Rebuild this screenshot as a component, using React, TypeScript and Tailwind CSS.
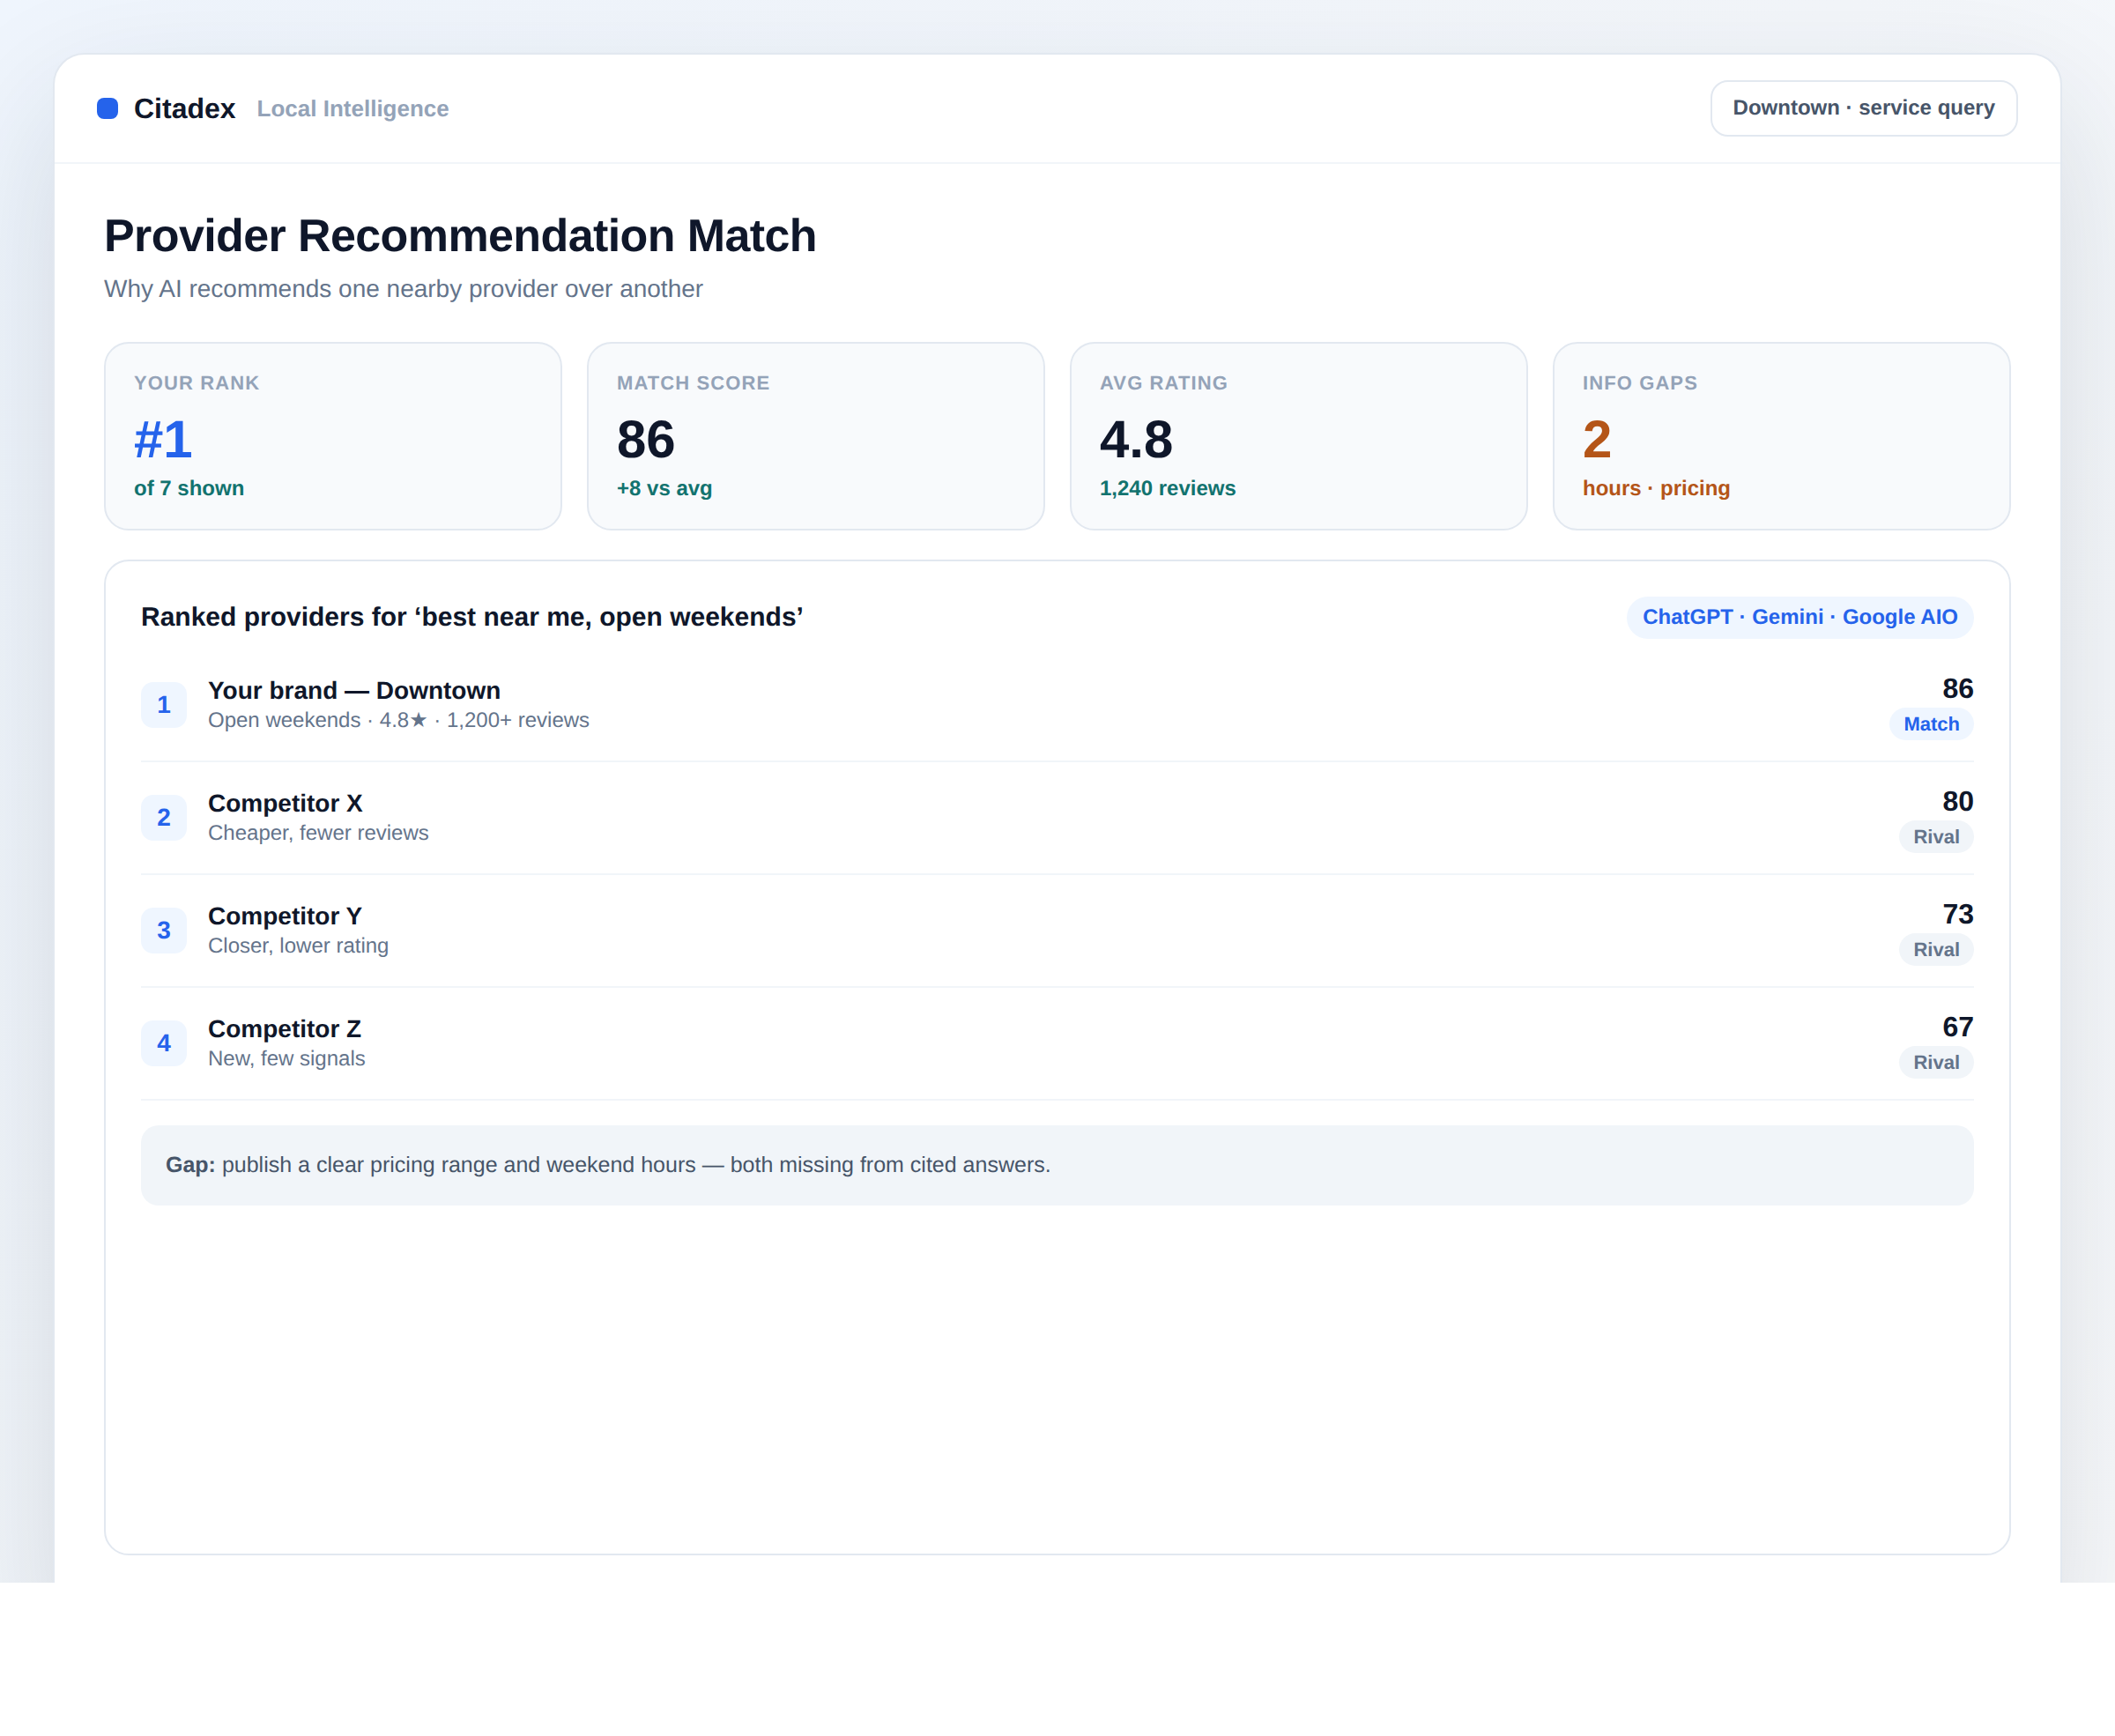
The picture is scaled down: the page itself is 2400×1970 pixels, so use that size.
const stats = [
  { label: "YOUR RANK", value: "#1", sub: "of 7 shown", valueClass: "text-[#2563eb]", subClass: "text-[#12736f]" },
  { label: "MATCH SCORE", value: "86", sub: "+8 vs avg", valueClass: "text-[#0f172a]", subClass: "text-[#12736f]" },
  { label: "AVG RATING", value: "4.8", sub: "1,240 reviews", valueClass: "text-[#0f172a]", subClass: "text-[#12736f]" },
  { label: "INFO GAPS", value: "2", sub: "hours · pricing", valueClass: "text-[#b45518]", subClass: "text-[#b45518]" },
];

const rows = [
  { n: 1, name: "Your brand — Downtown", desc: "Open weekends · 4.8★ · 1,200+ reviews", score: 86, tag: "Match", mine: true },
  { n: 2, name: "Competitor X", desc: "Cheaper, fewer reviews", score: 80, tag: "Rival", mine: false },
  { n: 3, name: "Competitor Y", desc: "Closer, lower rating", score: 73, tag: "Rival", mine: false },
  { n: 4, name: "Competitor Z", desc: "New, few signals", score: 67, tag: "Rival", mine: false },
];

export default function App() {
  return (
    <div className="h-[1796px] overflow-hidden px-[60px] pt-[60px] bg-[linear-gradient(135deg,#eff5fd_0%,#f3f6fa_50%,#f9fafc_100%)] font-['Liberation_Sans',Arial,sans-serif] [text-rendering:geometricPrecision]">
      <div className="h-[1800px] rounded-[36px] border-2 border-[#e2e8f0] bg-white shadow-[0_60px_160px_rgba(20,40,60,0.14)]">
        <header className="flex h-[124px] items-center justify-between border-b-2 border-[#f1f5f9] px-[48px]">
          <div className="flex items-center">
            <span className="h-6 w-6 rounded-lg bg-[#2563eb]" />
            <span className="ml-[18px] text-[32px] leading-9 font-bold text-[#0f172a]">Citadex</span>
            <span className="ml-6 text-[26px] leading-9 font-semibold text-[#94a3b8]">Local Intelligence</span>
          </div>
          <div className="flex h-16 items-center rounded-[20px] border-2 border-[#e2e8f0] bg-white px-6 text-2xl font-semibold text-[#475569]">
            Downtown · service query
          </div>
        </header>
        <main className="px-[56px] pt-[50px]">
          <h1 className="text-[52px] leading-[64px] font-bold tracking-[-0.6px] text-[#0f172a]">Provider Recommendation Match</h1>
          <p className="mt-[10px] text-[28px] leading-9 text-[#64748b]">Why AI recommends one nearby provider over another</p>
          <div className="mt-[42px] grid grid-cols-4 gap-[28px]">
            {stats.map((s) => (
              <div key={s.label} className="h-[214px] rounded-[28px] border-2 border-[#e2e8f0] bg-[#f8fafc] px-8 pt-[31px]">
                <div className="text-[22px] leading-7 font-semibold tracking-[1.1px] text-[#94a3b8]">{s.label}</div>
                <div className={`mt-[16px] text-[60px] leading-[68px] font-bold ${s.valueClass}`}>{s.value}</div>
                <div className={`mt-[6px] text-2xl leading-8 font-semibold ${s.subClass}`}>{s.sub}</div>
              </div>
            ))}
          </div>
          <section className="mt-[33px] h-[1130px] rounded-[28px] border-2 border-[#e2e8f0] bg-white px-10 pt-10">
            <div className="flex h-12 items-center justify-between">
              <h2 className="text-[30px] leading-10 font-bold text-[#0f172a]">Ranked providers for ‘best near me, open weekends’</h2>
              <span className="flex h-12 items-center rounded-full bg-[#eff6ff] px-[18px] text-2xl font-semibold text-[#2563eb]">ChatGPT · Gemini · Google AIO</span>
            </div>
            <div className="mt-3">
              {rows.map((r) => (
                <div key={r.n} className="flex h-[128px] items-center border-b-2 border-[#f1f5f9]">
                  <div className="flex h-[52px] w-[52px] items-center justify-center rounded-[14px] bg-[#eff6ff] text-[28px] font-bold text-[#2563eb]">{r.n}</div>
                  <div className="ml-6 flex-1">
                    <div className="text-[28px] leading-9 font-semibold text-[#0f172a]">{r.name}</div>
                    <div className="text-2xl leading-8 text-[#64748b]">{r.desc}</div>
                  </div>
                  <div className="flex flex-col items-end pt-[2px]">
                    <div className="text-[32px] leading-9 font-bold text-[#0f172a]">{r.score}</div>
                    <span className={`mt-[4px] flex h-[37px] items-center rounded-full px-4 text-[22px] font-semibold ${r.mine ? "bg-[#eff6ff] text-[#2563eb]" : "bg-[#f1f5f9] text-[#64748b]"}`}>{r.tag}</span>
                  </div>
                </div>
              ))}
            </div>
            <div className="mt-7 flex h-[91px] items-center rounded-[20px] bg-[#f1f5f9] px-7 text-[25px] text-[#475569]">
              <p><strong className="font-bold">Gap:</strong> publish a clear pricing range and weekend hours — both missing from cited answers.</p>
            </div>
          </section>
        </main>
      </div>
    </div>
  );
}
